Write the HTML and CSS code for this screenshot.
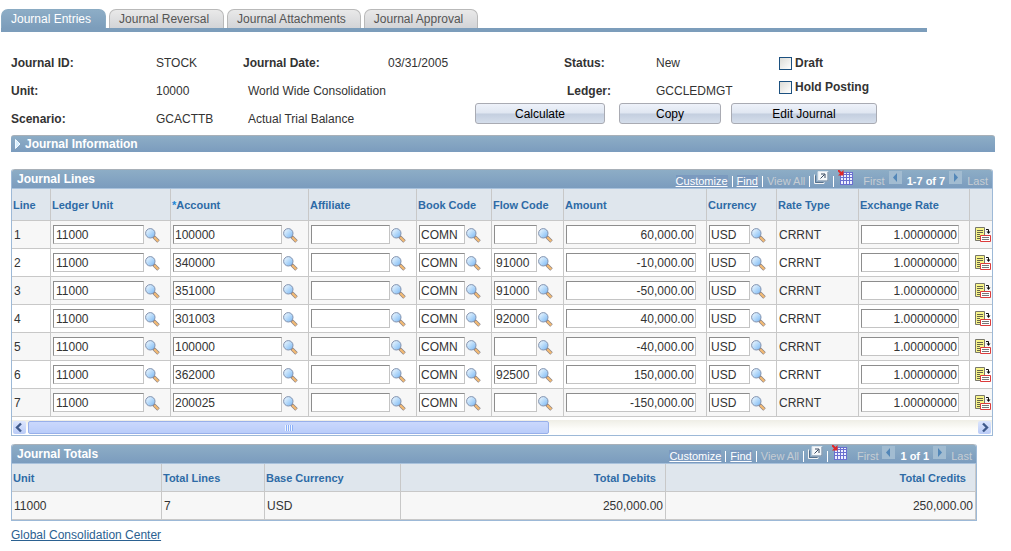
FILE: index.html
```html
<!DOCTYPE html>
<html lang="en">
<head>
<meta charset="utf-8">
<title>Journal Entries</title>
<link rel="stylesheet" href="styles.css">
</head>
<body>
<svg class="sprite" aria-hidden="true">
  <defs>
    <linearGradient id="glass" x1="0" y1="0" x2="1" y2="1">
      <stop offset="0.1" stop-color="#eaf6fe"/>
      <stop offset="1" stop-color="#76b6f4"/>
    </linearGradient>
  </defs>
  <symbol id="i-lookup" viewBox="0 0 15 15">
    <path d="M8.500 8.500l5 5" stroke="#8b8488" stroke-width="3.600"/>
    <path d="M9.200 9.200l4 4" stroke="#f4bb74" stroke-width="2.200"/>
    <circle cx="5.300" cy="5.300" r="4.700" fill="url(#glass)" stroke="#8292ae"/>
  </symbol>
  <symbol id="i-detail" viewBox="0 0 16 16">
    <path d="M.5 .5h9v13h-9z" fill="#f8f58a" stroke="#77776a"/>
    <path d="M2 3.500h6M2 5.500h6M2 7.500h3M2 9.500h3M2 11.500h3" stroke="#66664a"/>
    <path d="M11 2.500h2.500v3" fill="none" stroke="#111"/>
    <path d="M11.500 4.500h4l-2 2.500z" fill="#111"/>
    <path d="M5.500 8.500h10v6h-10z" fill="#fff" stroke="#dc3c3c"/>
    <path d="M7 10.500h7M7 12.500h7" stroke="#777"/>
  </symbol>
  <symbol id="i-popup" viewBox="0 0 15 14">
    <path d="M.5 4v9h9.500v-1.500" fill="none" stroke="#f4f4f4"/>
    <path d="M1.500 5v7h8" fill="none" stroke="#57718c"/>
    <path d="M4 1h10v9.500H4z" fill="#f6f8fa" stroke="#dbe4ec"/>
    <path d="M4 10.500h10v-9" fill="none" stroke="#66809b"/>
    <path d="M6.500 8l4-4M7 3.500h4v4" fill="none" stroke="#3a4a60"/>
  </symbol>
  <symbol id="i-grid" viewBox="0 0 15 15">
    <path d="M2 2h13v13H2z" fill="#6a6fd0"/>
    <path d="M3 5h2v2H3zM6 5h2v2H6zM9 5h2v2H9zM12 5h2v2h-2zM3 8h2v2H3zM6 8h2v2H6zM9 8h2v2H9zM12 8h2v2h-2zM3 11h2v3H3zM6 11h2v3H6zM9 11h2v3H9zM12 11h2v3h-2zM6 3h2v1H6zM9 3h2v1H9zM12 3h2v1h-2z" fill="#eef0ff"/>
    <path d="M0 0l4 4" stroke="#e02828" stroke-width="2"/>
    <path d="M5.500 0v5.500H0z" fill="#e02828"/>
  </symbol>
  <symbol id="i-prev" viewBox="0 0 13 13"><path d="M8 2v9L4 6.500z" fill="#5387b8"/></symbol>
  <symbol id="i-next" viewBox="0 0 13 13"><path d="M5 2v9l4-4.500z" fill="#5387b8"/></symbol>
  <symbol id="i-left" viewBox="0 0 13 13"><path d="M8 2.500l-4 4 4 4" fill="none" stroke="#3f5a8c" stroke-width="2.400"/></symbol>
  <symbol id="i-right" viewBox="0 0 13 13"><path d="M5 2.500l4 4-4 4" fill="none" stroke="#3f5a8c" stroke-width="2.400"/></symbol>
</svg>

<nav class="tabs">
  <a class="tab tab-active" href="#">Journal Entries</a>
  <a class="tab" href="#">Journal Reversal</a>
  <a class="tab" href="#">Journal Attachments</a>
  <a class="tab" href="#">Journal Approval</a>
</nav>

<main>
  <section class="summary">
    <div class="fields">
      <b>Journal ID:</b><span>STOCK</span><b>Journal Date:</b><span>03/31/2005</span>
      <b>Unit:</b><span>10000</span><span class="descr">World Wide Consolidation</span>
      <b>Scenario:</b><span>GCACTTB</span><span class="descr">Actual Trial Balance</span>
    </div>
    <div class="side">
      <div class="state">
        <div class="status">
          <b>Status:</b><span>New</span>
          <b class="ledger">Ledger:</b><span>GCCLEDMGT</span>
        </div>
        <div class="checks">
          <label><input type="checkbox">Draft</label>
          <label><input type="checkbox">Hold Posting</label>
        </div>
      </div>
      <div class="actions">
        <button class="btn btn-calc" type="button">Calculate</button>
        <button class="btn btn-copy" type="button">Copy</button>
        <button class="btn btn-edit" type="button">Edit Journal</button>
      </div>
    </div>
  </section>

  <button class="section-bar" type="button">
    <svg class="twisty" viewBox="0 0 6 10"><path d="M.5 .5v9l4.500-4.500z" fill="#d7efff" stroke="#f1f9ff"/></svg>
    Journal Information
  </button>

  <section class="panel lines">
    <header class="bar">
      <h2>Journal Lines</h2>
      <div class="tools">
        <a href="#">Customize</a><i></i><a href="#">Find</a><i></i><span>View All</span><i></i>
        <button type="button" aria-label="Open in window"><svg class="ic15"><use href="#i-popup"/></svg></button><i></i>
        <button type="button" aria-label="Download"><svg class="ic15"><use href="#i-grid"/></svg></button>
        <span class="first">First</span>
        <button class="pager" type="button" aria-label="Previous"><svg><use href="#i-prev"/></svg></button>
        <b>1-7 of 7</b>
        <button class="pager" type="button" aria-label="Next"><svg><use href="#i-next"/></svg></button>
        <span>Last</span>
      </div>
    </header>
    <table class="grid">
      <colgroup>
        <col class="c-line"><col class="c-unit"><col class="c-account"><col class="c-affiliate"><col class="c-book"><col class="c-flow"><col class="c-amount"><col class="c-currency"><col class="c-type"><col class="c-rate"><col>
      </colgroup>
      <thead>
        <tr><th>Line</th><th>Ledger Unit</th><th><span class="req">*</span>Account</th><th>Affiliate</th><th>Book Code</th><th>Flow Code</th><th>Amount</th><th>Currency</th><th>Rate Type</th><th>Exchange Rate</th><th></th></tr>
      </thead>
      <tbody id="lines"></tbody>
    </table>
    <div class="scroll">
      <button type="button" aria-label="Scroll left"><svg><use href="#i-left"/></svg></button>
      <div class="track"><div class="thumb"><span class="grip"></span></div></div>
      <button type="button" aria-label="Scroll right"><svg><use href="#i-right"/></svg></button>
    </div>
  </section>

  <section class="panel totals">
    <header class="bar">
      <h2>Journal Totals</h2>
      <div class="tools">
        <a href="#">Customize</a><i></i><a href="#">Find</a><i></i><span>View All</span><i></i>
        <button type="button" aria-label="Open in window"><svg class="ic15"><use href="#i-popup"/></svg></button><i></i>
        <button type="button" aria-label="Download"><svg class="ic15"><use href="#i-grid"/></svg></button>
        <span class="first">First</span>
        <button class="pager" type="button" aria-label="Previous"><svg><use href="#i-prev"/></svg></button>
        <b>1 of 1</b>
        <button class="pager" type="button" aria-label="Next"><svg><use href="#i-next"/></svg></button>
        <span>Last</span>
      </div>
    </header>
    <table class="grid">
      <colgroup><col class="t-unit"><col class="t-lines"><col class="t-base"><col class="t-debits"><col></colgroup>
      <thead>
        <tr><th>Unit</th><th>Total Lines</th><th>Base Currency</th><th class="num">Total Debits</th><th class="num">Total Credits</th></tr>
      </thead>
      <tbody>
        <tr><td>11000</td><td>7</td><td>USD</td><td class="num">250,000.00</td><td class="num">250,000.00</td></tr>
      </tbody>
    </table>
  </section>

  <a class="more" href="#">Global Consolidation Center</a>
</main>
<script src="script.js"></script>
</body>
</html>
```
FILE: styles.css
```css
* { box-sizing: border-box; }
body { margin: 0; background: #fff; color: #333; font: 12px/16px "Liberation Sans", Arial, sans-serif; }
button, input { font: inherit; color: inherit; margin: 0; }
button { padding: 0; border: 0; background: none; cursor: pointer; }
svg { display: block; }
.sprite { position: absolute; width: 0; height: 0; }

/* Tabs */
.tabs { display: flex; gap: 3px; margin: 9px 84px 0 1px; border-bottom: 4px solid #7c9dbb; }
.tab { height: 19px; padding: 1px 14px 0 9px; border: 1px solid #b9b9b9; border-bottom: 0; border-radius: 7px 7px 0 0; background: linear-gradient(#e9e9e9, #d3d4d7); color: #555; line-height: 16px; text-decoration: none; }
.tab-active { border-color: #8aabc3; background: linear-gradient(#8dadc6, #7c9dbb); color: #fff; }

main { padding: 17px 16px 0 11px; }

/* Journal summary */
.summary { display: flex; }
.fields { display: grid; grid-template-columns: 145px 87px 145px 87px; grid-auto-rows: 28px; align-items: center; }
.descr { grid-column: 3 / span 2; padding-left: 5px; }
.side { flex: 1; }
.state { display: flex; height: 54px; padding-left: 89px; }
.status { display: grid; grid-template-columns: 92px 123px; grid-auto-rows: 28px; align-items: center; }
.ledger { padding-left: 3px; }
.checks { display: flex; flex-direction: column; padding-top: 2px; }
.checks label { display: flex; align-items: center; gap: 3px; height: 24px; font-weight: bold; }
.checks input { appearance: none; width: 13px; height: 13px; border: 1px solid #1c5180; background: linear-gradient(135deg, #dcdcd7, #fff); }
.actions { display: flex; }
.btn { height: 21px; border: 1px solid #a9abb3; border-radius: 3px; background: linear-gradient(#eef2fa, #dfe6f1 48%, #c3cedf 52%, #d5deeb); color: #000; }
.btn-calc { width: 130px; margin-right: 14px; }
.btn-copy { width: 102px; margin-right: 10px; }
.btn-edit { width: 146px; }

/* Bars */
.section-bar { display: flex; align-items: center; gap: 4px; width: 100%; height: 17px; margin-top: 2px; padding-left: 4px; border-top: 1px solid #a8b0b8; border-radius: 3px 3px 0 0; background: linear-gradient(#8dadc6, #7b9cbe); color: #fff; font-weight: bold; }
.twisty { width: 6px; height: 10px; }
.bar { display: flex; justify-content: space-between; height: 20px; padding: 0 4px 0 5px; border-top: 1px solid #a8b0b8; border-bottom: 1px solid #a9c2dc; border-radius: 3px 3px 0 0; background: linear-gradient(#8dadc6, #7b9cbe); color: #fff; }
.bar h2 { margin: 0; font-size: 12px; line-height: 18px; }
.tools { display: flex; align-items: flex-end; gap: 4px; font-size: 11px; line-height: 13px; color: #c6cdd3; }
.tools a { background: #7b9abf; color: #fff; }
.tools b { color: #fff; }
.tools i { width: 1px; height: 11px; margin-bottom: 1px; background: #fff; }
.tools button { align-self: flex-start; }
.tools .first { margin-left: 6px; }
.ic15 { width: 15px; height: 15px; }
.pager { margin: 1px 1px 0 0; background: #a2bcd1; }
.pager svg { width: 13px; height: 13px; }

/* Panels and grids */
.panel { border: 1px solid #9db9d7; border-top: 0; border-radius: 3px 3px 0 0; }
.lines { margin: 17px 2px 0 0; }
.totals { margin: 8px 18px 0 0; }
.grid { width: 100%; table-layout: fixed; border-collapse: separate; border-spacing: 0; }
.grid th { height: 32px; padding: 0 0 0 1px; border: solid #c8c8c8; border-width: 0 1px 1px 0; background: #dfe6ed; color: #2e6ba6; font-size: 11px; text-align: left; }
.grid td { height: 28px; padding: 0 2px; border: solid #c8c8c8; border-width: 0 1px 1px 0; overflow: hidden; }
.lines tr > :last-child { border-right: 0; }
.grid tbody tr:nth-child(odd) { background: #f7f7f7; }
.req { color: #1b87d6; }
.totals th { height: 28px; }
.grid .num { text-align: right; }
.grid th.num { padding-right: 9px; }
.c-line { width: 39px; }
.c-unit { width: 120px; }
.c-account { width: 138px; }
.c-affiliate { width: 108px; }
.c-book { width: 75px; }
.c-flow { width: 72px; }
.c-amount { width: 143px; }
.c-currency { width: 70px; }
.c-type { width: 82px; }
.c-rate { width: 111px; }
.t-unit { width: 150px; }
.t-lines { width: 103px; }
.t-base { width: 136px; }
.t-debits { width: 265px; }

.cell { display: flex; gap: 1px; }
.cell input { height: 19px; padding: 0 1px; border: 1px solid #c4c4c4; border-top-color: #8d8d8d; border-left-color: #8d8d8d; border-radius: 0; background: #fff; }
.cell button { padding-top: 1px; }
.cell .amt { text-align: right; }
.cell .w-unit { width: 91px; padding-left: 2px; }
.w-account { width: 109px; }
.w-affiliate { width: 79px; }
.w-book { width: 46px; }
.w-flow { width: 43px; }
.w-amount { width: 130px; }
.w-currency { width: 41px; }
.w-rate { width: 98px; }
.detail { display: block; margin-left: 3px; }
.detail svg { width: 16px; height: 16px; }

/* Horizontal scroll strip */
.scroll { display: flex; height: 15px; margin-top: 3px; background: linear-gradient(#efeee6, #fdfdfa 60%, #fff); }
.scroll button { flex: none; width: 15px; height: 15px; padding: 1px; }
.scroll svg { width: 13px; height: 13px; border-radius: 2px; background: linear-gradient(#dde6fd, #b9cbf7); }
.track { flex: 1; padding: 1px; }
.thumb { display: flex; align-items: center; justify-content: center; width: 55%; height: 13px; border: 1px solid #98b0ea; border-radius: 2px; background: linear-gradient(#cad8fc, #bacdfa); }
.grip { width: 8px; height: 6px; background: repeating-linear-gradient(90deg, #eef4fe 0 1px, #8cb0f8 1px 2px); }

.more { display: inline-block; margin-top: 6px; color: #2b6191; }
```
FILE: script.js
```js
const lines = [
  ["100000", "", "60,000.00"],
  ["340000", "91000", "-10,000.00"],
  ["351000", "91000", "-50,000.00"],
  ["301003", "92000", "40,000.00"],
  ["100000", "", "-40,000.00"],
  ["362000", "92500", "150,000.00"],
  ["200025", "", "-150,000.00"]
];

const lookup = (kind, label, value) =>
  `<td><div class="cell"><input class="w-${kind}" aria-label="${label}" value="${value}">` +
  `<button type="button" aria-label="Look up ${label}"><svg class="ic15"><use href="#i-lookup"/></svg></button></div></td>`;

const amount = (kind, label, value) =>
  `<td><div class="cell"><input class="amt w-${kind}" aria-label="${label}" value="${value}"></div></td>`;

document.getElementById("lines").innerHTML = lines.map(([account, flow, value], n) =>
  `<tr><td>${n + 1}</td>` +
  lookup("unit", "Ledger Unit", "11000") +
  lookup("account", "Account", account) +
  lookup("affiliate", "Affiliate", "") +
  lookup("book", "Book Code", "COMN") +
  lookup("flow", "Flow Code", flow) +
  amount("amount", "Amount", value) +
  lookup("currency", "Currency", "USD") +
  `<td>CRRNT</td>` +
  amount("rate", "Exchange Rate", "1.00000000") +
  `<td><button class="detail" type="button" aria-label="Line detail"><svg><use href="#i-detail"/></svg></button></td></tr>`
).join("");
```
